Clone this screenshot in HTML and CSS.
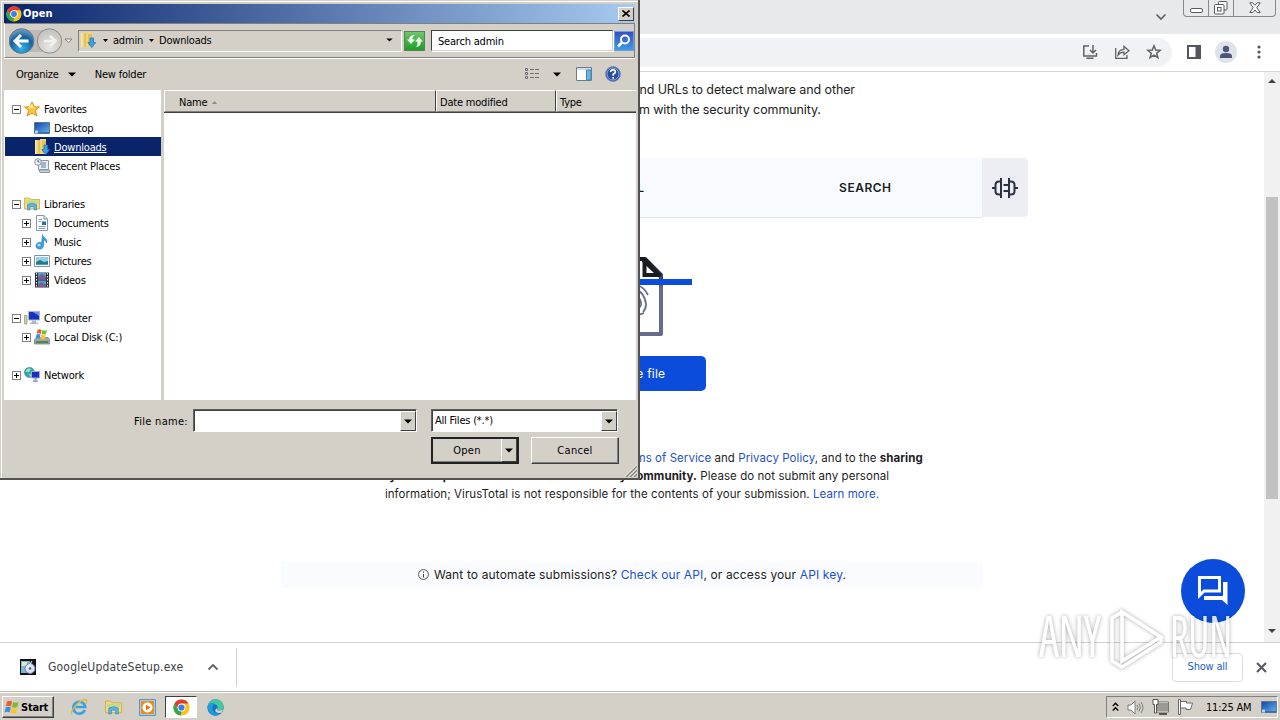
FILE: index.html
```
<!DOCTYPE html>
<html lang="en">
<head>
  <meta charset="utf-8">
  <meta name="viewport" content="width=device-width, initial-scale=1.0">
  <title>VirusTotal</title>
  <link rel="stylesheet" href="styles.css">
</head>
<body>
<!-- shared icons -->
<svg class="defs" width="0" height="0">
  <defs>
    <linearGradient id="sky" x1="0" y1="0" x2="1" y2="1"><stop offset="0" stop-color="#0f44a8"/><stop offset="1" stop-color="#6ab4ee"/></linearGradient>
    <linearGradient id="folder" x1="0" y1="0" x2="1" y2="0"><stop offset="0" stop-color="#fdf0a8"/><stop offset="1" stop-color="#dcb84c"/></linearGradient>
    <linearGradient id="file-edge" x1="0" y1="0" x2="0" y2="1"><stop offset="0" stop-color="#16181c"/><stop offset=".3" stop-color="#444b66"/><stop offset=".4" stop-color="#666d8c"/></linearGradient>
    <radialGradient id="ball" cx=".5" cy=".8" r=".8"><stop offset="0" stop-color="#35b4e8"/><stop offset=".6" stop-color="#14609c"/><stop offset="1" stop-color="#7aa6c6"/></radialGradient>
    <radialGradient id="silver" cx=".5" cy=".75" r=".7"><stop offset="0" stop-color="#e4e4e1"/><stop offset="1" stop-color="#c4c2be"/></radialGradient>
  </defs>
  <symbol id="i-chrome" viewBox="0 0 16 16">
    <circle cx="8" cy="8" r="7.6" fill="#fbc116"/>
    <path d="M1.4 4.2A7.6 7.6 0 0 1 14.6 4.2H8L4.7 10Z" fill="#e33b2e"/>
    <path d="M1.4 4.2 4.7 9.9 8 11.8 7.2 15.6A7.6 7.6 0 0 1 1.4 4.2Z" fill="#2da94f"/>
    <circle cx="8" cy="8" r="3.8" fill="#fff"/><circle cx="8" cy="8" r="2.9" fill="#3b7de9"/>
  </symbol>
  <symbol id="i-downloads" viewBox="0 0 16 16">
    <path d="M1 1h5v14H1z" fill="url(#folder)"/><path d="M6 0h6v15H6z" fill="#efd67a"/><path d="M8 2h4v12H8z" fill="#e0bf5a"/>
    <path d="M10 6h3.600v4.500H15.800L11.800 15.600 7.800 10.500H10z" fill="#3aa0e4" stroke="#2370b4" stroke-width=".7"/>
  </symbol>
  <symbol id="i-star" viewBox="0 0 16 16"><path d="M8 .8 10.200 5.600 15.500 6 11.400 9.500 13 15 8 12 3 15 4.600 9.500.5 6 5.800 5.600z" fill="#fbc53a" stroke="#d68a16" stroke-width=".9"/><path d="M8 2.500 9.500 6.500 13 7H4z" fill="#ffeb9a"/></symbol>
  <symbol id="i-desktop" viewBox="0 0 16 16"><path d="M.5 2.500h15v11H.5z" fill="url(#sky)" stroke="#5c7894"/><path d="M1 12h14v1.500H1z" fill="#3a6ea8"/><path d="M1 10.500h3v3H1z" fill="#a7d7f5"/></symbol>
  <symbol id="i-recent" viewBox="0 0 16 16"><path d="M4.500 2.500h10v9h-10z" fill="#e6eef4" stroke="#8b9aa8"/><path d="M7 5h5M7 7h5M7 9h5" stroke="#5d7f9d"/><path d="M5 12h10.500v2.500H6z" fill="#cdd6dd" stroke="#8795a0"/><circle cx="4" cy="4" r="3.300" fill="#eef4f8" stroke="#8090a0"/><path d="M4 2v2h1.500" fill="none" stroke="#456"/></symbol>
  <symbol id="i-library" viewBox="0 0 16 16"><path d="M.5 2h5l1 1.500h9V13H.5z" fill="#f3dc84" stroke="#c9a84a" stroke-width=".8"/><path d="M2 4.500h12v3H2z" fill="#bfdc8c"/><path d="M3.500 14V8.500Q8 6 12.500 8.500V14H10V10.500H6V14z" fill="#5cb6e8" stroke="#3583b8" stroke-width=".6"/></symbol>
  <symbol id="i-document" viewBox="0 0 16 16"><path d="M2.500.5H10l3.500 3.500v11.500h-11z" fill="#fafcfe" stroke="#8198ae"/><path d="M10 .5V4h3.500" fill="#cfdce8" stroke="#8198ae"/><path d="M4.500 4.500H8M4.500 6.500h3M4.500 11.500h7M4.500 13.500h7" stroke="#8ba5bf"/><path d="M8 6.500h4V10H8z" fill="#2c6db4"/></symbol>
  <symbol id="i-music" viewBox="0 0 16 16"><path d="M8.500.5c0 3 5.500 3.500 4 8.500-.3-2-2-3-3-3V12a3.800 3.400 0 1 1-1.800-3.200z" fill="#38a2e2" stroke="#2476b6" stroke-width=".6"/><ellipse cx="5" cy="11" rx="1.500" ry="1.200" fill="#b5e2fa"/></symbol>
  <symbol id="i-picture" viewBox="0 0 16 16"><path d="M.5 2.500h15v11H.5z" fill="#fff" stroke="#7f93a2"/><path d="M2 4h12v8H2z" fill="#8fd0ef"/><path d="M2 9l4-2 4 2 4-1v4H2z" fill="#247b80"/><path d="M2 11h12v1H2z" fill="#3a9ed0"/></symbol>
  <symbol id="i-video" viewBox="0 0 16 16"><path d="M1 .5h14v15H1z" fill="#2b3437"/><path d="M4 1h8v6.500H4zM4 8.500h8V15H4z" fill="#519ccc"/><path d="M4 5l4-3 4 3v2.500H4zM4 13l3-3 5 3v2H4z" fill="#7e5b8e"/><path d="M2.500 1v14M13.500 1v14" stroke="#fff" stroke-dasharray="1.500 1.500"/></symbol>
  <symbol id="i-computer" viewBox="0 0 16 16"><path d="M4.500 1.500h11v8.500h-11z" fill="#1b2fc0" stroke="#aab6c4"/><path d="M9 2h6v4z" fill="#6f8bee"/><path d="M8 10.500h4v2H14V14H6v-1.500h2z" fill="#aeb8c2"/><path d="M.5 5.500h2.500v8.500H.5z" fill="#c6d68e" stroke="#8b9480" stroke-width=".7"/></symbol>
  <symbol id="i-winflag" viewBox="0 0 16 16"><path d="M3 2.500Q5.500 1 8 2.500L7 7.500Q4.500 6 2 7.500z" fill="#ee5a2c"/><path d="M9 3Q11.500 4.500 14.500 3L13.400 8Q10.500 9.500 8 8z" fill="#7fbb2e"/><path d="M1.700 8.500Q4 7 6.800 8.500L5.700 13.500Q3.500 12 .6 13.500z" fill="#3c8fe0"/><path d="M7.800 9Q10.500 10.500 13.200 9L12 14Q9.500 15.500 6.700 14z" fill="#fcc52c"/></symbol>
  <symbol id="i-disk" viewBox="0 0 16 16"><path d="M.5 10.500 3 8.500h11l1.700 2v4.500H.5z" fill="#9ba7af" stroke="#66727c" stroke-width=".7"/><path d="M2 12h12v2H2z" fill="#4c8a3c"/><path d="M3.500 1Q5.500-.5 7.500 1l-.8 4Q5 3.500 2.700 5z" fill="#ee5a2c"/><path d="M8.300 1q2.300 1.200 4.700 0l-1 4q-2.300 1.200-4.500 0z" fill="#7fbb2e"/><path d="M2.500 5.500q2.200-1.200 4 0L5.700 9.500q-2-1.200-4 0z" fill="#3c8fe0"/><path d="M7.300 5.700q2.200 1.200 4.500 0L11 9.700q-2.300 1.200-4.500 0z" fill="#fcc52c"/></symbol>
  <symbol id="i-network" viewBox="0 0 16 16"><circle cx="5.500" cy="5.500" r="5" fill="#31a6b4" stroke="#287b91" stroke-width=".6"/><path d="M2 3q3-3 5-1l-2 3H2zM5 7l3 1-2 2z" fill="#9de0b2"/><path d="M7.500 4.500h8V11h-8z" fill="#1a2fc2" stroke="#9fb0c4"/><path d="M10.500 11h2v2.500H14v1.500H9v-1.500h1.500z" fill="#94a3b4"/></symbol>
  <symbol id="i-down" viewBox="0 0 8 5"><path d="M0 .5h8L4 4.500z"/></symbol>
  <symbol id="i-down-sm" viewBox="0 0 5 3"><path d="M0 0h5L2.500 3z"/></symbol>
</svg>

<div class="desktop">

  <!-- browser -->
  <div class="browser">
    <div class="tabstrip">
      <svg class="tab-search" width="12" height="8" viewBox="0 0 12 8"><path d="M1.500 1.500 6 6l4.500-4.500" fill="none" stroke="#5f6368" stroke-width="1.700"/></svg>
      <div class="window-buttons">
        <span><svg width="13" height="6"><rect x=".5" y=".5" width="12" height="4" rx="1.500" fill="#fff" stroke="#555b66"/></svg></span>
        <span><svg width="14" height="14"><rect x="4.500" y=".5" width="8.500" height="8.500" rx="1" fill="#fff" stroke="#555b66"/><rect x=".5" y="3.500" width="9.500" height="9.500" rx="1" fill="#fff" stroke="#555b66"/><rect x="3.500" y="6.500" width="3.500" height="3.500" fill="none" stroke="#555b66"/></svg></span>
        <span class="wide"><svg width="12" height="12"><path d="M.8.800h3L6 3.300 8.200.800h3L7.800 5.700l3.400 4.800h-3L6 8 3.800 10.500h-3l3.400-4.800z" fill="#fff" stroke="#555b66"/></svg></span>
      </div>
    </div>
    <div class="toolbar">
      <div class="omnibox">
        <svg width="16" height="16" viewBox="0 0 16 16" fill="none" stroke="#5f6368" stroke-width="1.500"><path d="M7 2H1.800v10H14.500V9M4.500 14.200h7M11 1v8M8 6l3 3 3-3"/></svg>
        <svg width="16" height="16" viewBox="0 0 16 16" fill="none" stroke="#5f6368" stroke-width="1.300"><path d="M1.700 4v10.300H13V11M4 11Q4.500 5.500 10 5.300V2.500l5 4.200-5 4V8.200Q6 8.200 4 11z"/></svg>
        <svg width="16" height="16" viewBox="0 0 16 16" fill="none" stroke="#5f6368" stroke-width="1.500"><path d="M8 1.800 9.700 6l4.500.3-3.500 2.900 1.200 4.500L8 11.200l-3.900 2.500 1.200-4.500L1.800 6.300 6.300 6z"/></svg>
      </div>
      <svg class="side-panel" width="14" height="14"><path d="M1 1h12v12H1z" fill="#fff" stroke="#55565b" stroke-width="2"/><path d="M8.500 0H14v14H8.500z" fill="#55565b"/></svg>
      <div class="avatar"><svg width="14" height="14" fill="#4c5677"><circle cx="7" cy="4" r="3.200"/><path d="M1 13v-2q0-3 6-3t6 3v2z"/></svg></div>
      <svg class="kebab" width="4" height="14" fill="#55565b"><circle cx="2" cy="2" r="1.600"/><circle cx="2" cy="7" r="1.600"/><circle cx="2" cy="12" r="1.600"/></svg>
    </div>

    <div class="viewport">
      <div class="page">
        <p class="intro">Analyse suspicious files, domains, IPs and URLs to detect malware and other<br>breaches, automatically share them with the security community.</p>
        <div class="tabs">
          <span>FILE</span><span>URL</span><span>SEARCH</span>
          <div class="extension">
            <svg width="28" height="22" viewBox="0 0 28 22" fill="none" stroke="#2c3140" stroke-width="2"><path d="M10 1v20M18 1v20M10 4.500H8Q4.500 4.500 4.500 8v6Q4.500 17.500 8 17.500h2M1 11h3.500M18 4.500h2Q23.500 4.500 23.500 8v6Q23.500 17.500 20 17.500h-2M23.500 11H27M12.500 8H18M12.500 14H18"/></svg>
          </div>
        </div>
        <svg class="file-art" width="120" height="82" viewBox="0 0 120 82" fill="none">
          <path d="M31 78V3H73L89 19V78Z" stroke="url(#file-edge)" stroke-width="4" stroke-linejoin="round"/>
          <path d="M72.500 4V19H88" stroke="#1a1c20" stroke-width="4"/>
          <path d="M71 4 88 20" stroke="#1a1c20" stroke-width="4"/>
          <path d="M65 29Q72 31 76 39M54 43Q55 34 62 33 72 35 74 48 74 53 71 56M59 51Q58 42 64 40 70 43 69 49 68 52 65 53M62 57Q66 60 72 57M64 45V50" stroke="#686f8a" stroke-width="1.800"/>
          <path d="M0 23h120v6H0z" fill="#0b4dda"/>
        </svg>
        <div class="choose">Choose file</div>
        <p class="legal">By submitting data above, you are agreeing to our <a>Terms of Service</a> and <a>Privacy Policy</a>, and to the <b>sharing</b><br><b>of your Sample submission with the security community.</b> Please do not submit any personal<br>information; VirusTotal is not responsible for the contents of your submission. <a>Learn more.</a></p>
        <div class="api">
          <svg width="11" height="11" fill="none" stroke="#444"><circle cx="5.500" cy="5.500" r="4.900" stroke-width=".9"/><path d="M5.500 5v3.500M5.500 2.500v1.300"/></svg>
          <span>Want to automate submissions? <a>Check our API</a>, or access your <a>API key</a>.</span>
        </div>
      </div>
      <div class="scrollbar">
        <svg width="8" height="4"><path d="M0 4h8L4 0z" fill="#444"/></svg>
        <div class="thumb"></div>
        <svg width="8" height="4"><path d="M0 0h8L4 4z" fill="#444"/></svg>
      </div>
      <div class="chat">
        <svg width="32" height="32" viewBox="0 0 32 32"><path d="M2.500 2.500h20v13.500H7L2.500 20.500z" fill="none" stroke="#fff" stroke-width="3"/><path d="M26 7h4.500v23L25 25H7v-4h19z" fill="#fff"/></svg>
      </div>
    </div>

    <div class="shelf">
      <div class="download">
        <svg width="16" height="16"><path d="M0 0h16v16H0z" fill="#111"/><path d="M1 2h9l1 12H1z" fill="#7fb5d8"/><path d="M2 3h5v4H2z" fill="#d9edc8"/><circle cx="10" cy="9.500" r="5" fill="#dbe2f4" stroke="#7180b8"/><circle cx="10" cy="9.500" r="1.300" fill="#4a5a9a"/><path d="M12 2 7 10" stroke="#fff"/></svg>
        <span>GoogleUpdateSetup.exe</span>
        <svg width="12" height="8"><path d="M1.500 6.500 6 2l4.500 4.500" fill="none" stroke="#5f6368" stroke-width="1.800"/></svg>
      </div>
      <div class="show-all">Show all</div>
      <svg class="shelf-close" width="11" height="11"><path d="M1 1l9 9M10 1l-9 9" stroke="#55585c" stroke-width="2"/></svg>
    </div>
  </div>

  <!-- taskbar -->
  <div class="taskbar">
    <div class="start"><svg width="16" height="16"><use href="#i-winflag"/></svg>Start</div>
    <div class="quick">
      <span><svg width="18" height="18" viewBox="0 0 18 18"><path d="M14.800 12A6 6 0 1 1 15.200 9H5.500" fill="none" stroke="#37a3e0" stroke-width="2.600"/><path d="M2 16.500C-1 14 8 3 15 1.500q3 0 1 4" fill="none" stroke="#e9b53c" stroke-width="1.300"/></svg></span>
      <span><svg width="17" height="17"><use href="#i-library"/></svg></span>
      <span><svg width="17" height="17"><path d="M.5.500h16v16H.5z" fill="#a6cfec" stroke="#5795c4"/><path d="M2 2h13v13H2z" fill="#ef8a1c"/><circle cx="8.500" cy="8.500" r="5" fill="#fff"/><path d="M7 5.500v6l4.500-3z" fill="#e8730a"/></svg></span>
      <span class="active"><svg width="17" height="17"><use href="#i-chrome"/></svg></span>
      <span><svg width="17" height="17" viewBox="0 0 16 16"><circle cx="8" cy="8" r="7.700" fill="#1572c4"/><path d="M.5 7Q2 .3 8.500.3q7 .7 7.200 7-.7 4-5.700 3.400-1.500-.7 0-2.200Q10 4.500 6 5 2 5 .5 7z" fill="#44c8a0"/><path d="M.5 7Q3 2.500 7 4 4 7 6 11q2 3.500 7 2.500-3 3-7 2-5-2-5.500-8.500z" fill="#1f9ade"/><path d="M10 8.500q-1.500 1.500 0 2.200 3 .6 5.200-1l-1.200 3q-4 1.500-6-1-1-2 2-3.200z" fill="#d6d2ca"/></svg></span>
    </div>
    <div class="tray">
      <svg width="7" height="10" fill="none" stroke="#000" stroke-width="1.400"><path d="M.8 4 3.500 1.200 6.200 4M.8 8.500 3.500 5.700 6.200 8.500"/></svg>
      <svg width="17" height="15" fill="none" stroke="#7c7c7c"><path d="M1 5h3l4-4v13l-4-4H1z" fill="#fff"/><path d="M10 5q2 2.500 0 5M12 3.500q3 4 0 8M14 2q4 5.500 0 11"/></svg>
      <svg width="17" height="16"><path d="M4.500 3.500h12v9h-12z" fill="#9a9a96" stroke="#fff"/><path d="M4 3h12.500v10H4z" fill="none" stroke="#555" stroke-width=".8"/><path d="M7 15h8" stroke="#555" stroke-width="2"/><path d="M1 .5h5v5H4.500V14H2.500V5.500H1z" fill="#fff" stroke="#555"/></svg>
      <svg width="17" height="16" fill="#fff" stroke="#6a6a6a"><path d="M1.500.5h2v15h-2zM3.500 2.500h6v1.500h6l-2 6.500H9V9H3.500z"/></svg>
      <span class="clock">11:25 AM</span>
      <svg width="16" height="16"><use href="#i-desktop"/></svg>
    </div>
  </div>

  <!-- file open dialog -->
  <div class="dialog">
    <div class="titlebar">
      <svg width="16" height="16"><use href="#i-chrome"/></svg><span>Open</span>
      <div class="close"><svg width="8" height="7"><path d="M.5.500l7 6M7.500.500l-7 6" stroke="#000" stroke-width="1.600"/></svg></div>
    </div>
    <div class="navbar">
      <svg class="back-forward" width="64" height="28" viewBox="0 0 64 28">
        <path d="M14 3h28v22H14z" fill="#bdbab5"/>
        <circle cx="12.500" cy="14" r="12.300" fill="url(#ball)" stroke="#5d7890"/><path d="M12 8 6 14l6 6M6.500 14h13" fill="none" stroke="#fff" stroke-width="3"/>
        <circle cx="40.500" cy="14" r="12.200" fill="url(#silver)" stroke="#8d8c89"/><path d="M41 9l5.500 5-5.500 5M46 14H35" fill="none" stroke="#f2f2f0" stroke-width="2.500"/>
        <path d="M56 12h7L59.500 15.500z" fill="#f2f2f0" stroke="#77756f" stroke-width=".9"/>
      </svg>
      <div class="address">
        <svg width="16" height="16"><use href="#i-downloads"/></svg>
        <svg class="crumb" width="5" height="3"><use href="#i-down-sm"/></svg><span>admin</span>
        <svg class="crumb" width="5" height="3"><use href="#i-down-sm"/></svg><span>Downloads</span>
        <svg class="history" width="7" height="4"><use href="#i-down"/></svg>
      </div>
      <div class="refresh"><svg width="18" height="16" fill="#effff0"><path d="M1 6.500 5 11l4-4.500H6.500Q6 3.500 9 2 3 2 3.300 6.500zM9 8.500 13 4l4 4.500h-2.300Q15 13.500 10 14 12 12 11.500 8.500z"/></svg></div>
      <div class="search">Search admin</div>
      <div class="search-go"><svg width="16" height="16" fill="none" stroke="#fff"><circle cx="9" cy="6.500" r="4" stroke-width="2"/><path d="M6 9.500 2 13.500" stroke-width="2.500"/></svg></div>
    </div>
    <div class="commands">
      <span>Organize</span><svg width="8" height="5"><use href="#i-down"/></svg><span class="new-folder">New folder</span>
      <div class="view-tools">
        <svg width="16" height="14" fill="none" stroke="#6f6f74"><path d="M1.500 1.500h2v2h-2zM1.500 5.500h2v2h-2zM1.500 9.500h2v2h-2z"/><path d="M6 2.500h9M6 6.500h9M6 10.500h9" stroke-dasharray="4 1"/></svg>
        <svg class="view-arrow" width="8" height="5"><use href="#i-down"/></svg>
        <svg width="16" height="14"><path d="M.5.500h15v13H.5z" fill="#fff" stroke="#6b7b90"/><path d="M1 1h14v2H1z" fill="#cfdbe8"/><path d="M10.500 3v10H15V3z" fill="#62b8e0" stroke="#4b86ac"/></svg>
        <svg width="16" height="16"><circle cx="8" cy="8" r="7.500" fill="#294f9f" stroke="#8092bc"/><circle cx="8" cy="8" r="6" fill="none" stroke="#a9bbe2" stroke-width=".8"/><path d="M5.600 6Q5.800 3.800 8 3.800T10.400 6Q10.400 7 8.200 8.200V9.700M8.200 11v1.700" fill="none" stroke="#fff" stroke-width="1.700"/></svg>
      </div>
    </div>
    <div class="panes">
      <div class="tree">
        <div class="node"><i class="box"></i><svg width="16" height="16"><use href="#i-star"/></svg><span>Favorites</span></div>
        <div class="node child"><i></i><svg width="16" height="16"><use href="#i-desktop"/></svg><span>Desktop</span></div>
        <div class="node child selected"><i></i><svg width="16" height="16"><use href="#i-downloads"/></svg><span>Downloads</span></div>
        <div class="node child gap"><i></i><svg width="16" height="16"><use href="#i-recent"/></svg><span>Recent Places</span></div>
        <div class="node"><i class="box"></i><svg width="16" height="16"><use href="#i-library"/></svg><span>Libraries</span></div>
        <div class="node child"><i class="box plus"></i><svg width="16" height="16"><use href="#i-document"/></svg><span>Documents</span></div>
        <div class="node child"><i class="box plus"></i><svg width="16" height="16"><use href="#i-music"/></svg><span>Music</span></div>
        <div class="node child"><i class="box plus"></i><svg width="16" height="16"><use href="#i-picture"/></svg><span>Pictures</span></div>
        <div class="node child gap"><i class="box plus"></i><svg width="16" height="16"><use href="#i-video"/></svg><span>Videos</span></div>
        <div class="node"><i class="box"></i><svg width="16" height="16"><use href="#i-computer"/></svg><span>Computer</span></div>
        <div class="node child gap"><i class="box plus"></i><svg width="16" height="16"><use href="#i-disk"/></svg><span>Local Disk (C:)</span></div>
        <div class="node"><i class="box plus"></i><svg width="16" height="16"><use href="#i-network"/></svg><span>Network</span></div>
      </div>
      <div class="list">
        <div class="columns">
          <div class="col-name">Name <svg width="5" height="3"><path d="M0 3h5L2.500 0z" fill="#8b8882"/></svg></div>
          <div>Date modified</div>
          <div>Type</div>
        </div>
      </div>
    </div>
    <div class="footer">
      <label>File name:</label>
      <div class="combo"><span></span><b><svg width="8" height="5"><use href="#i-down"/></svg></b></div>
      <div class="combo filter"><span>All Files (*.*)</span><b><svg width="8" height="5"><use href="#i-down"/></svg></b></div>
      <div class="buttons">
        <div class="button open"><span>Open</span><b><svg width="8" height="5"><use href="#i-down"/></svg></b></div>
        <div class="button">Cancel</div>
      </div>
    </div>
    <svg class="grip" width="12" height="12"><path d="M1 12 12 1M5 12l7-7M9 12l3-3" stroke="#808080" stroke-width="1.500"/><path d="M0 11.500 11.500 0M4 11.500 12 3.500M8 11.500l4-4" stroke="#fff" stroke-width=".8"/></svg>
  </div>

  <svg class="watermark" width="200" height="74">
    <g fill="#fff" font-family="Open Sans, sans-serif" font-size="56">
      <text x="2" y="53" textLength="62" lengthAdjust="spacingAndGlyphs">ANY</text>
      <text x="133" y="53" textLength="62" lengthAdjust="spacingAndGlyphs">RUN</text>
    </g>
    <path d="M85 8 124 33 85 57z M85 8 75 14V57L85 63 124 38V33" fill="none" stroke="#fff" stroke-width="3.500"/>
  </svg>
</div>
</body>
</html>
```
FILE: styles.css
```
* {
  box-sizing: border-box;
}

body {
  margin: 0;
  overflow: hidden;
  font-family: "DejaVu Sans Condensed", "DejaVu Sans", sans-serif;
  font-stretch: condensed;
  font-size: 11px;
  letter-spacing: -0.2px;
  color: #000;
}

svg {
  display: block;
  flex-shrink: 0;
}

.defs {
  position: absolute;
}

.desktop {
  position: relative;
  display: flex;
  flex-direction: column;
  width: 1280px;
  height: 720px;
}

/* browser */
.browser {
  display: flex;
  flex-direction: column;
  height: 692px;
  background: #fff;
}

.tabstrip {
  display: flex;
  justify-content: flex-end;
  height: 34px;
  padding-right: 4px;
  background: #e6eaed;
}

.tab-search {
  margin: 13px 16px 0 0;
}

.window-buttons {
  display: flex;
  height: 17px;
  border: 1px solid #858a90;
  border-top: none;
  border-radius: 0 0 4px 4px;
}

.window-buttons span {
  display: flex;
  align-items: center;
  justify-content: center;
  width: 25px;
  border-right: 1px solid #858a90;
}

.window-buttons span:first-child {
  align-items: flex-end;
  padding-bottom: 2px;
}

.window-buttons .wide {
  width: 41px;
  border: none;
}

.toolbar {
  display: flex;
  align-items: center;
  height: 38px;
  padding: 0 20px 1px 0;
  border-bottom: 1px solid #d5d6d8;
}

.omnibox {
  display: flex;
  align-items: center;
  justify-content: flex-end;
  gap: 16px;
  width: 1172px;
  height: 29px;
  padding-right: 10px;
  border-radius: 15px;
  background: #f0f2f5;
}

.side-panel {
  margin-left: 15px;
}

.avatar {
  display: flex;
  align-items: center;
  justify-content: center;
  width: 22px;
  height: 22px;
  margin: 0 20px 0 14px;
  border-radius: 50%;
  background: #dfe2e9;
}

.omnibox,
.avatar {
  flex-shrink: 0;
}

.viewport {
  position: relative;
  display: flex;
  height: 570px;
}

.page {
  display: flex;
  flex-direction: column;
  align-items: center;
  width: 1264px;
  font-family: Inter, "Open Sans", sans-serif;
  font-stretch: normal;
  color: #1c1d22;
}

.page p {
  margin: 0;
  text-align: center;
  white-space: nowrap;
}

.page a {
  color: #1d50c8;
}

.intro {
  height: 86px;
  padding-top: 8px;
  font-size: 12.5px;
  line-height: 20px;
  letter-spacing: -0.1px;
}

.tabs {
  position: relative;
  display: grid;
  grid-template-columns: repeat(3, 1fr);
  place-items: center;
  width: 700px;
  height: 60px;
  border-bottom: 1px solid #e3e5ea;
  background: #f7fafe;
  font-size: 12px;
  font-weight: 600;
  letter-spacing: 0.5px;
}

.extension {
  position: absolute;
  left: 700px;
  top: 0;
  display: flex;
  align-items: center;
  justify-content: center;
  width: 46px;
  height: 59px;
  border-radius: 0 4px 4px 0;
  background: #eceef4;
}

.file-art {
  margin-top: 38px;
}

.choose {
  display: flex;
  align-items: center;
  justify-content: center;
  width: 148px;
  height: 35px;
  margin-top: 18px;
  border-radius: 5px;
  background: #0b4dda;
  color: #fff;
  font-size: 12px;
  letter-spacing: 0.2px;
}

.page .legal {
  margin-top: 58px;
  font-size: 11.5px;
  line-height: 18px;
  letter-spacing: 0.06px;
}

.api {
  display: flex;
  align-items: center;
  justify-content: center;
  gap: 5px;
  width: 702px;
  height: 26px;
  margin-top: 59px;
  padding-bottom: 2px;
  background: #f9fbfe;
  font-size: 12px;
  letter-spacing: 0.13px;
}

.scrollbar {
  display: flex;
  flex-direction: column;
  align-items: center;
  width: 16px;
  padding: 7px 0;
  background: #f1f1f1;
}

.thumb {
  width: 12px;
  height: 302px;
  margin: 114px 0 130px;
  background: #c1c1c1;
}

/* floating chat button */
.chat {
  position: absolute;
  right: 35px;
  bottom: 19px;
  display: flex;
  align-items: center;
  justify-content: center;
  width: 64px;
  height: 64px;
  border-radius: 50%;
  background: #0b4dda;
}

.shelf {
  display: flex;
  align-items: center;
  height: 50px;
  padding-right: 13px;
  border-top: 1px solid #d0d1d3;
  border-bottom: 1px solid #b8b8b4;
}

.download {
  display: flex;
  align-items: center;
  width: 237px;
  height: 39px;
  padding-left: 20px;
  border-right: 1px solid #d0d1d3;
  font-size: 12px;
  letter-spacing: 0.2px;
  color: #3c4043;
}

.download span {
  width: 147px;
  margin: 0 12px;
}

.show-all {
  width: 71px;
  height: 29px;
  margin: 0 13px 0 auto;
  border: 1px solid #dadce0;
  border-radius: 4px;
  color: #1a5fd0;
  line-height: 26px;
  text-align: center;
}

/* taskbar */
.taskbar {
  display: flex;
  align-items: center;
  height: 28px;
  padding: 1px 2px 0;
  border-top: 1px solid #fff;
  background: #d4d0c8;
}

.start {
  display: flex;
  align-items: center;
  gap: 1px;
  width: 52px;
  height: 22px;
  padding-left: 1px;
  border: 1px solid;
  border-color: #fff #404040 #404040 #fff;
  box-shadow: inset -1px -1px #808080;
  font-weight: bold;
}

.quick {
  display: flex;
  align-items: center;
  margin-left: 8px;
}

.quick span {
  display: flex;
  align-items: center;
  justify-content: center;
  width: 34px;
  height: 22px;
}

.quick .active {
  width: 32px;
  margin: 0 1px;
  border: 1px solid;
  border-color: #404040 #fff #fff #404040;
  background: #fff;
}

.tray {
  display: flex;
  align-items: center;
  gap: 8px;
  width: 172px;
  height: 22px;
  margin-left: auto;
  padding-left: 5px;
  border: 1px solid;
  border-color: #808080 #fff #fff #808080;
}

.clock {
  width: 47px;
  margin-left: 4px;
  white-space: nowrap;
}

/* dialog */
.dialog {
  position: absolute;
  left: 0;
  top: 0;
  width: 640px;
  height: 480px;
  padding: 4px 3px 3px 4px;
  border: solid;
  border-width: 0 2px 2px 0;
  border-color: #55534f;
  background: #d4d0c8;
  box-shadow: inset 1px 1px #d4d0c8, inset 2px 2px #fff;
  white-space: nowrap;
}

.titlebar {
  display: flex;
  align-items: center;
  gap: 1px;
  height: 19px;
  padding: 0 1px 0 2px;
  background: linear-gradient(to right, #0a246a, #a6caf0);
  color: #fff;
  font-weight: bold;
}

.titlebar span {
  letter-spacing: 0.1px;
}

.close {
  display: flex;
  align-items: center;
  justify-content: center;
  width: 16px;
  height: 14px;
  margin-left: auto;
  border: 1px solid;
  border-color: #fff #404040 #404040 #fff;
  background: #d4d0c8;
}

.navbar {
  display: flex;
  align-items: center;
  height: 35px;
  padding: 0 0 0 4px;
  border: 1px solid;
  border-color: #808080 #808080 #808080 #fff;
  box-shadow: 0 1px #fff;
}

.navbar > * {
  flex-shrink: 0;
}

.address {
  display: flex;
  align-items: center;
  width: 324px;
  height: 22px;
  margin-left: 5px;
  padding: 0 8px 1px 1px;
  border: 1px solid;
  border-color: #808080 #fff #fff #808080;
}

.crumb {
  margin: 0 5px 0 6px;
}

.address .crumb:nth-child(2) {
  margin-left: 7px;
}

.history {
  margin-left: auto;
}

.refresh {
  display: flex;
  align-items: center;
  justify-content: center;
  width: 21px;
  height: 20px;
  margin-left: 2px;
  border: 1px solid #5a805a;
  background: linear-gradient(#6fc769, #1e9d2b);
}

.search {
  width: 182px;
  height: 21px;
  margin-left: 6px;
  padding: 1px 0 0 6px;
  border: 1px solid;
  border-color: #404040 #d4d0c8 #d4d0c8 #404040;
  box-shadow: 1px 1px #fff;
  background: #fff;
  line-height: 19px;
}

.search-go {
  display: flex;
  align-items: center;
  justify-content: center;
  width: 20px;
  height: 20px;
  margin-left: 1px;
  border: 1px solid #6aa2d4;
  background: linear-gradient(#3450c8, #3c9be8);
}

.commands {
  display: flex;
  align-items: center;
  height: 32px;
  padding: 0 14px 0 12px;
}

.commands > svg {
  margin-left: 9px;
}

.new-folder {
  margin-left: 19px;
}

.view-tools {
  display: flex;
  align-items: center;
  gap: 13px;
  margin-left: auto;
}

.view-arrow {
  margin-right: 2px;
}

.panes {
  display: grid;
  grid-template-columns: 157px 472px;
  gap: 3px;
  height: 310px;
}

.tree {
  padding: 9px 0 0 1px;
  background: #fff;
}

.node {
  display: flex;
  align-items: center;
  height: 19px;
  padding-left: 7px;
}

.node i {
  width: 9px;
  height: 9px;
  margin: 1px 3px 0 0;
}

.node span {
  margin-left: 4px;
  padding-top: 2px;
}

.child {
  padding-left: 17px;
}

.gap {
  margin-bottom: 19px;
}

.node .box {
  border: 1px solid #808080;
  background: linear-gradient(#000, #000) center / 5px 1px no-repeat;
}

.node .plus {
  background: linear-gradient(#000, #000) center / 5px 1px no-repeat, linear-gradient(#000, #000) center / 1px 5px no-repeat;
}

.selected {
  background: #0a246a;
  color: #fff;
  text-decoration: underline;
}

.list {
  background: #fff;
}

.columns {
  display: grid;
  grid-template-columns: 272px 120px 1fr;
  height: 23px;
  border-bottom: 1px solid #404040;
  box-shadow: inset 0 -1px #808080;
  background: #d4d0c8;
}

.columns div {
  display: flex;
  align-items: center;
  gap: 5px;
  padding: 2px 0 0 3px;
  border: 1px solid;
  border-color: #fff #404040 transparent #fff;
}

.columns .col-name {
  padding-left: 14px;
}

.columns div:last-child {
  border-right: none;
}

.footer {
  display: grid;
  grid-template-columns: 185px 228px 201px;
  grid-template-rows: 23px 27px;
  row-gap: 5px;
  align-items: center;
  padding-top: 9px;
}

.footer label {
  padding: 2px 1px 0 0;
  text-align: right;
  letter-spacing: 0.3px;
}

.combo {
  display: flex;
  height: 23px;
  margin-left: 4px;
  border: 1px solid;
  border-color: #606060 #fff #fff #606060;
  box-shadow: inset 1px 1px #404040;
  background: #fff;
}

.filter {
  margin-left: 14px;
}

.combo span {
  flex: 1;
  padding-left: 3px;
  line-height: 22px;
}

.footer b {
  display: flex;
  align-items: center;
  justify-content: center;
  width: 16px;
  margin-top: 1px;
  border: 1px solid;
  border-color: #fff #404040 #404040 #fff;
  background: #d4d0c8;
}

.buttons {
  display: flex;
  grid-column: 1 / 4;
  gap: 12px;
  padding-left: 427px;
}

.button {
  flex-shrink: 0;
  width: 88px;
  height: 27px;
  border: 1px solid;
  border-color: #fff #404040 #404040 #fff;
  box-shadow: inset -1px -1px #808080;
  line-height: 26px;
  text-align: center;
  letter-spacing: 0.3px;
}

.open {
  display: flex;
  border: 2px solid #222;
  line-height: 24px;
}

.open span {
  flex: 1;
}

.open b {
  margin: 0;
  border-width: 0 1px 1px 1px;
}

.grip {
  position: absolute;
  right: 1px;
  bottom: 1px;
}

.watermark {
  position: absolute;
  left: 1037px;
  top: 604px;
  opacity: 0.85;
  filter: drop-shadow(0 0 2px rgba(0, 0, 0, 0.4));
}
```
